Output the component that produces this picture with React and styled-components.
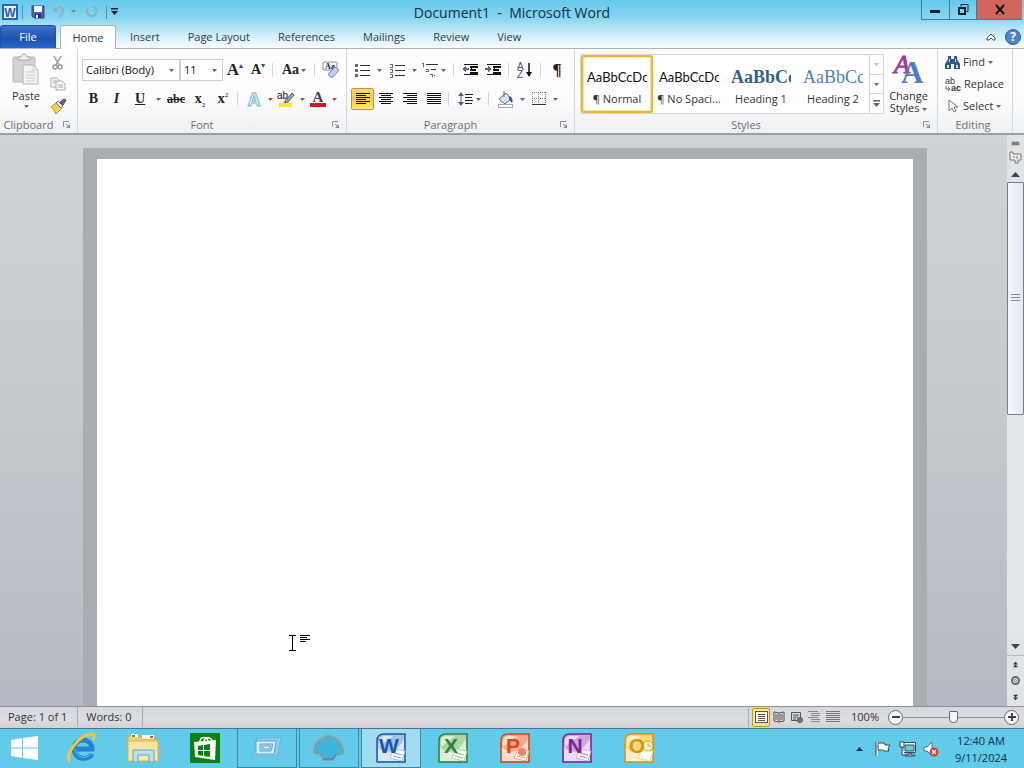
import React from 'react'
import styled, { createGlobalStyle } from 'styled-components'

const Drop = ({ color = '#666' }) => (
  <svg width="5" height="3" viewBox="0 0 5 3"><path d="M0 0h5L2.5 3z" fill={color} /></svg>
)

const Lines = ({ rows, color = '#111' }) => (
  <svg width="16" height="14" viewBox="0 0 16 14" shapeRendering="crispEdges">
    {rows.map(([x, w], i) => <rect key={i} x={x} y={1 + i * 2} width={w} height="1" fill={color} />)}
  </svg>
)

const left = [[1, 14], [1, 10], [1, 14], [1, 10], [1, 14], [1, 10]]
const center = [[1, 14], [3, 10], [1, 14], [3, 10], [1, 14], [3, 10]]
const right = [[1, 14], [5, 10], [1, 14], [5, 10], [1, 14], [5, 10]]
const full = [[1, 14], [1, 14], [1, 14], [1, 14], [1, 14], [1, 14]]
const outline = [[1, 10], [4, 9], [4, 9], [1, 10], [4, 9], [4, 9]]

const WordLogo = () => (
  <svg width="16" height="16" viewBox="0 0 16 16">
    <rect x="1" y="1" width="14" height="14" fill="#e8f2fc" stroke="#2a66b0" strokeWidth="2" />
    <text x="8" y="12.5" textAnchor="middle" fontSize="12" fontWeight="bold" fontFamily="Liberation Sans" fill="#1c5cab">W</text>
  </svg>
)

const SaveIcon = () => (
  <svg width="14" height="14" viewBox="0 0 14 14">
    <path d="M1 1h12v12H3l-2-2z" fill="#4b5fb0" stroke="#33428c" />
    <rect x="3" y="1" width="8" height="6" fill="#f4f8ff" />
    <rect x="4" y="9" width="6" height="4" fill="#223070" />
    <rect x="5" y="10" width="2" height="3" fill="#fff" />
  </svg>
)

const UndoIcon = () => (
  <svg width="13" height="13" viewBox="0 0 13 13" fill="none" stroke="#8fb2c2" strokeWidth="2">
    <path d="M3 5c3-4 8-3 8 1 0 3-2 4-4 6" /><path d="M1 1v6h6z" fill="#8fb2c2" stroke="none" />
  </svg>
)

const RedoIcon = () => (
  <svg width="13" height="13" viewBox="0 0 13 13" fill="none" stroke="#8fb2c2" strokeWidth="2">
    <path d="M3 3C0 6 2 11 6.500 11S13 6 10 3" /><path d="M7 1h5v5z" fill="#8fb2c2" stroke="none" />
  </svg>
)

const MoreIcon = ({ color = '#123' }) => (
  <svg width="7" height="7" viewBox="0 0 7 7"><path d="M0 0h7v1.500H0zM0 3h7L3.500 7z" fill={color} /></svg>
)

const PasteIcon = () => (
  <svg width="28" height="32" viewBox="0 0 28 32">
    <rect x="1" y="3" width="22" height="25" rx="1" fill="#d4d2d4" stroke="#bbb8ba" />
    <path d="M6 6V3h3c0-4 6-4 6 0h3v3z" fill="#eee" stroke="#aaa" />
    <path d="M11 11h10l5 5v14H11z" fill="#f3f2f4" stroke="#b5b3b6" />
    <path d="M21 11v5h5M14 18h9M14 21h9M14 24h9M14 27h9" fill="none" stroke="#cbc9cc" />
  </svg>
)

const CutIcon = () => (
  <svg width="12" height="15" viewBox="0 0 12 15" fill="none" stroke="#999" strokeWidth="1.500">
    <path d="M2 1l5 9M9 1L4 10" /><circle cx="3" cy="12" r="2" /><circle cx="8" cy="12" r="2" />
  </svg>
)

const CopyIcon = () => (
  <svg width="16" height="14" viewBox="0 0 16 14" fill="#f6f6f6" stroke="#aaa">
    <path d="M1 1h6l2 2v7H1z" /><path d="M6 4h6l3 3v6H6z" /><path d="M3 4h3M3 6h2M8 8h5M8 10h5" />
  </svg>
)

const PainterIcon = () => (
  <svg width="17" height="16" viewBox="0 0 17 16">
    <path d="M1 9l5-4 6 5-6 6C5 13 3 11 1 9z" fill="#ead65a" stroke="#a8942a" />
    <path d="M6 5l2-2 5 5-2 2z" fill="#eee" stroke="#777" />
    <path d="M10 4l4-3 2 1-3 5z" fill="#6d5f9a" stroke="#4c4270" />
  </svg>
)

const ClearIcon = () => (
  <svg width="18" height="18" viewBox="0 0 18 18">
    <rect x="1" y="1" width="14" height="8" rx="1" fill="#f4f6fa" stroke="#8a94a8" />
    <text x="8" y="8" textAnchor="middle" fontSize="8" fontWeight="bold" fontFamily="Liberation Serif" fill="#223">Aa</text>
    <path d="M7 12l6-6 4 3-6 7c-3 1-5-1-4-4z" fill="#c9cdea" stroke="#7d82aa" />
  </svg>
)

const HighlightIcon = () => (
  <svg width="18" height="18" viewBox="0 0 18 18">
    <text x="0" y="9" fontSize="10" fontFamily="Liberation Sans" fill="#111">ab</text>
    <path d="M8 11l7-8 2 2-6 7-4 1z" fill="#9aa0b8" stroke="#555b75" />
    <rect x="2" y="13" width="13" height="4" fill="#f7ec1d" />
  </svg>
)

const FontColorIcon = () => (
  <svg width="16" height="18" viewBox="0 0 16 18">
    <text x="8" y="12" textAnchor="middle" fontSize="15" fontWeight="bold" fontFamily="Liberation Serif" fill="#36466f">A</text>
    <rect x="0" y="13" width="16" height="4" fill="#d3141c" />
  </svg>
)

const EffectIcon = () => (
  <svg width="16" height="17" viewBox="0 0 16 17">
    <text x="8" y="15" textAnchor="middle" fontSize="18" fontFamily="Liberation Sans" fontWeight="bold" fill="#e2f6fd" stroke="#74b6d4">A</text>
  </svg>
)

const ListIcon = ({ numbered }) => (
  <svg width="15" height="15" viewBox="0 0 15 15" shapeRendering="crispEdges">
    {[2, 7, 12].map(y => (
      <g key={y}>
        {numbered
          ? <path d={`M0 ${y - 1}h2v3M0 ${y + 2}h3`} stroke="#5c6a86" fill="none" />
          : <rect x="0" y={y - 1} width="3" height="3" fill="#5c6a86" />}
        <rect x="5" y={y} width="10" height="1" fill="#333" />
      </g>
    ))}
  </svg>
)

const MultiIcon = () => (
  <svg width="17" height="16" viewBox="0 0 17 16" shapeRendering="crispEdges" stroke="#5c6a86" fill="none">
    <path d="M0 1.500h1v3M4 7.500h2v2H4M8 12.500h2v2" />
    <path d="M4 2.500h12M9 7.500h5M12 13.500h1" stroke="#333" />
  </svg>
)

const IndentIcon = ({ out }) => (
  <svg width="17" height="14" viewBox="0 0 17 14" shapeRendering="crispEdges">
    <path d="M2 1.500h14M2 11.500h14" stroke="#111" />
    <path d="M8 4h8M8 7h6M8 9.500h8" stroke="#111" strokeWidth="2" />
    <path d="M9 1v12" stroke="#111" strokeDasharray="1 1" />
    <path d={out ? 'M4 3v6L0 6zM4 5h3v2H4z' : 'M3 3v6l4-3zM0 5h3v2H0z'} fill="#4d62a8" />
  </svg>
)

const SortIcon = () => (
  <svg width="16" height="17" viewBox="0 0 16 17">
    <text x="0" y="8" fontSize="10" fontFamily="Liberation Sans" fill="#45506b">A</text>
    <text x="0" y="16" fontSize="10" fontFamily="Liberation Sans" fill="#45506b">Z</text>
    <path d="M12 1v11" stroke="#111" strokeWidth="1.500" /><path d="M9 10h6l-3 5z" fill="#111" />
  </svg>
)

const SpacingIcon = () => (
  <svg width="16" height="16" viewBox="0 0 16 16">
    <path d="M3 3v10" stroke="#4d6088" /><path d="M0 5l3-4 3 4zM0 11l3 4 3-4z" fill="#4d6088" />
    <path d="M7 3.500h8M7 6.500h7M7 9.500h8M7 12.500h7" stroke="#222" />
  </svg>
)

const ShadingIcon = () => (
  <svg width="17" height="17" viewBox="0 0 17 17">
    <path d="M2 8l7-6 5 6-6 5z" fill="#dbe5f2" stroke="#5a6884" /><path d="M7 0v6" stroke="#5a6884" />
    <path d="M12 5c4 1 4 5 3 7-1-1-2-2-3-4z" fill="#3c5c8c" />
    <rect x="1.500" y="13.500" width="14" height="3" fill="#fff" stroke="#9ab" />
  </svg>
)

const BorderIcon = () => (
  <svg width="14" height="14" viewBox="0 0 14 14" shapeRendering="crispEdges" fill="none" stroke="#777">
    <path d="M.5 0v13M6.500 0v13M13.500 0v13M0 .5h14M0 6.500h14" strokeDasharray="1 1" />
    <path d="M0 12.500h14" stroke="#333" />
  </svg>
)

const ChangeIcon = () => (
  <svg width="32" height="30" viewBox="0 0 32 30" fontFamily="Liberation Serif">
    <text x="1" y="19" fontSize="26" fontStyle="italic" fill="#a23a9c" stroke="#a23a9c">A</text>
    <text x="8" y="29" fontSize="31" fontWeight="bold" fill="#4a7cc8">A</text>
  </svg>
)

const FindIcon = () => (
  <svg width="15" height="13" viewBox="0 0 15 13" fill="#33588f">
    <path d="M3 0h3v3h3V0h3v3l3 5v5H9V8H6v5H0V8l3-5z" />
    <path d="M2 9h2v3H2zM11 9h2v3h-2zM4 3h1v3H4zM10 3h1v3h-1z" fill="#c6dcf5" />
  </svg>
)

const ReplaceIcon = () => (
  <svg width="16" height="15" viewBox="0 0 16 15" fontFamily="Liberation Sans" fontSize="9" fill="#333">
    <text x="0" y="7">ab</text><text x="6" y="14" fontWeight="bold">ac</text>
    <path d="M1 9v3h4M3 10l2 2-2 2" fill="none" stroke="#3e62a4" />
  </svg>
)

const SelectIcon = () => (
  <svg width="15" height="15" viewBox="0 0 15 15">
    <path d="M4 1v11l3-3 2 4 2-1-2-4h4z" fill="#fff" stroke="#66708a" />
  </svg>
)

const Launcher = () => (
  <svg width="8" height="8" viewBox="0 0 8 8" fill="none" stroke="#8b8f96">
    <path d="M.5 6V.5H6M3 3l3 3" /><path d="M7 3v4H3z" fill="#8b8f96" stroke="none" />
  </svg>
)

const UpTri = () => <svg width="9" height="5" viewBox="0 0 9 5"><path d="M0 5h9L4.500 0z" fill="#444" /></svg>
const DownTri = () => <svg width="9" height="5" viewBox="0 0 9 5"><path d="M0 0h9L4.500 5z" fill="#444" /></svg>

const RulerIcon = () => (
  <svg width="13" height="13" viewBox="0 0 13 13" fill="#eee" stroke="#777">
    <path d="M1 1h3v2h8v6H9v3H6V9H1zM4 5l2 2M8 5v3" />
  </svg>
)

const PageJump = ({ down }) => (
  <svg width="5" height="7" viewBox="0 0 7 8" fill="#333">
    <path d={down ? 'M0 0h7L3.500 4zM0 4h7L3.500 8z' : 'M0 4h7L3.500 0zM0 8h7L3.500 4z'} />
  </svg>
)

const BrowseIcon = () => (
  <svg width="9" height="9" viewBox="0 0 9 9" fill="#eee" stroke="#666">
    <circle cx="4.500" cy="4.500" r="3.500" strokeWidth="2" /><circle cx="4.500" cy="4.500" r="1" />
  </svg>
)

const StartIcon = () => (
  <svg width="27" height="24" viewBox="0 0 27 24" fill="#fff">
    <path d="M0 4l11-2v9.500H0zM12 2l15-2v11.500H12zM0 12.500h11V22L0 20zM12 12.500h15V24l-15-2z" />
  </svg>
)

const IeIcon = () => (
  <svg width="32" height="32" viewBox="0 0 32 32" fill="none">
    <path d="M27 22c-3 6-17 7-18-5C9 5 27 5 27 17H11" stroke="#2484cf" strokeWidth="5" />
    <path d="M26 22c-4 5-15 5-16-5" stroke="#62bdf0" />
    <path d="M5 29C-2 25 14 2 27 2c3 0 3 3 1 6" stroke="#f1c63a" strokeWidth="3" />
  </svg>
)

const FolderIcon = () => (
  <svg width="32" height="30" viewBox="0 0 32 30">
    <path d="M1 3h12l2 3h16v22H1z" fill="#edcf78" stroke="#cba34c" />
    <path d="M4 1h7v3H4zM15 2h12v4H15z" fill="#fff8df" />
    <path d="M5 2h3v2H5z" fill="#36a545" /><path d="M23 3h3v2h-3z" fill="#cb5044" />
    <path d="M1 8h30v20H1z" fill="#f9e59c" stroke="#dcb65b" />
    <path d="M6 29V17h21v12h-5v-7H11v7z" fill="#b7def5" stroke="#5fa9d9" />
  </svg>
)

const StoreIcon = () => (
  <svg width="30" height="30" viewBox="0 0 30 30">
    <rect width="30" height="30" fill="#0a8212" />
    <path d="M10 9c0-6 8-6 8 0M14 9c0-6 8-5 8-1" fill="none" stroke="#fff" strokeWidth="1.500" />
    <path d="M4 9l22-2-1 20-20-3z" fill="#fff" />
    <path d="M8 13l5-1v5H8zM14 12l6-1v6h-6zM8 18h5v5l-5-1zM14 18h6v6l-6-1z" fill="#0a8212" />
  </svg>
)

const RunIcon = () => (
  <svg width="30" height="22" viewBox="0 0 30 22" fill="#d9effa" stroke="#5fa5d0">
    <path d="M5 1h24l-4 18H1z" fill="#8fcdec" stroke="#74b5da" /><path d="M4 4h20l-2 13H4z" />
    <path d="M8 7h13l-2 7H8z" fill="#9ad5f3" /><path d="M11 9h7l-1 3h-6z" fill="#eef9ff" />
  </svg>
)

const ShellIcon = () => (
  <svg width="32" height="26" viewBox="0 0 32 26">
    <path d="M10 25l-3-6-6-1c-1-3 0-5 1-6 0-3 2-5 4-6 1-3 4-3 6-4 2-2 5-2 7 0 3 0 5 2 6 4 3 1 4 4 4 6 2 3 2 5 0 7l-6 1-3 5z" fill="#3fb4dc" stroke="#a8918e" strokeWidth="1.500" />
    <path d="M8 9L6 6M13 6l-1-3M19 6l1-3M24 9l2-2" stroke="#a8918e" />
    <path d="M10 24h10l3-5" fill="none" stroke="#2f86aa" />
  </svg>
)

const OfficeIcon = ({ letter, color, pale }) => (
  <svg width="30" height="30" viewBox="0 0 30 30">
    <path d="M1 8Q1 1 8 1h21v28H1z" fill={pale} stroke={color} strokeWidth="1.500" />
    <path d="M2 28V14C10 22 20 20 28 6v22z" fill="#fff" opacity=".6" />
    <path d="M3 9Q3 3 8 3h9L3 14z" fill="#fff" opacity=".6" />
    <path d="M18 16l11 2-3 10-12-3z" fill="#fff" stroke={pale} />
    {letter === 'O'
      ? <g><circle cx="24" cy="13" r="5" fill="#fff6d8" stroke={color} /><path d="M24 10v3h3" fill="none" stroke={color} /></g>
      : <path d="M18 20l8 2M17 23l8 2" stroke={color} opacity=".6" />}
    {letter === 'P' && <circle cx="22" cy="19" r="4" fill="#e98360" />}
    <text x="13" y="20" textAnchor="middle" fontSize="21" fontWeight="bold" fontFamily="Liberation Sans" fill={color}>{letter}</text>
  </svg>
)

const FlagIcon = () => (
  <svg width="16" height="16" viewBox="0 0 16 16">
    <path d="M2 1v14" stroke="#fff" strokeWidth="2" /><path d="M1 1v14" stroke="#345" />
    <path d="M3 2h6l1 2h5l-2 3 1 3H9L8 9H3z" fill="#fff" stroke="#345" />
  </svg>
)

const NetIcon = () => (
  <svg width="17" height="16" viewBox="0 0 17 16">
    <path d="M5 3h11v8H5z" fill="#62cbea" stroke="#fff" strokeWidth="2" />
    <path d="M4 1.500h12.500v10H4zM6 4h9v6H6z" fill="none" stroke="#345" />
    <path d="M10 12v2H6v1h10v-1h-4v-2z" fill="#fff" stroke="#345" />
    <path d="M1 1h4v5H1zM3 6v8h3" fill="#fff" stroke="#345" />
  </svg>
)

const VolumeIcon = () => (
  <svg width="16" height="16" viewBox="0 0 16 16">
    <path d="M1 6h3l5-5v14l-5-5H1z" fill="#fff" stroke="#667" />
    <circle cx="11" cy="11" r="4.500" fill="#d83c35" />
    <path d="M9 9l4 4M13 9l-4 4" stroke="#fff" strokeWidth="1.500" />
  </svg>
)

const ReadIcon = () => (
  <svg width="12" height="12" viewBox="0 0 12 12" fill="none" stroke="#555">
    <path d="M6 2v9M6 2L1 1v9l5 1 5-1V1zM2 4h3M2 6h3M2 8h3M7 4h3M7 6h3M7 8h3" />
  </svg>
)

const WebIcon = () => (
  <svg width="12" height="12" viewBox="0 0 12 12" fill="none" stroke="#555">
    <path d="M.5 1.500h9v8h-9zM2 4h6M2 6h5M2 8h3" /><circle cx="9" cy="9" r="2.500" fill="#778" />
  </svg>
)

const PrintIcon = () => (
  <svg width="13" height="12" viewBox="0 0 13 12" fill="#fffbe8" stroke="#555" shapeRendering="crispEdges">
    <path d="M.5.5h12v11H.5zM3 3.500h7M3 5.500h7M3 7.500h7M3 9.500h7" />
  </svg>
)

const BeamIcon = () => (
  <svg width="22" height="18" viewBox="0 0 22 18" shapeRendering="crispEdges" fill="none" stroke="#000">
    <path d="M1 1.500h7M1 16.500h7M4.500 2v14M12 1.500h10M12 3.500h7M12 5.500h10M12 7.500h6" />
  </svg>
)

const tabs = ['Insert', 'Page Layout', 'References', 'Mailings', 'Review', 'View']

const apps = [
  { name: 'Word', letter: 'W', color: '#1b57a8', pale: '#9fc4ec', state: 'active' },
  { name: 'Excel', letter: 'X', color: '#347f3c', pale: '#abd6a4' },
  { name: 'PowerPoint', letter: 'P', color: '#cf4a1c', pale: '#f3a98a' },
  { name: 'OneNote', letter: 'N', color: '#72288c', pale: '#d3a4df' },
  { name: 'Outlook', letter: 'O', color: '#dc9413', pale: '#f8d879' },
]

const ClipboardGroup = () => (
  <Group $w={78}>
    <ClipBody>
      <PasteButton><PasteIcon /><span>Paste</span><Drop /></PasteButton>
      <ClipTools>
        <Tool $w={20} aria-label="Cut"><CutIcon /></Tool>
        <Tool $w={20} aria-label="Copy"><CopyIcon /></Tool>
        <Tool $w={20} aria-label="Format painter"><PainterIcon /></Tool>
      </ClipTools>
    </ClipBody>
    <GroupLabel><span>Clipboard</span><Corner aria-label="Clipboard options"><Launcher /></Corner></GroupLabel>
  </Group>
)

const FontGroup = () => (
  <Group $w={269}>
    <Rows>
      <Row>
        <SelectBox $w={98}>
          <select aria-label="Font" defaultValue="Calibri (Body)"><option>Calibri (Body)</option></select>
          <Drop />
        </SelectBox>
        <SelectBox $w={43}>
          <select aria-label="Font size" defaultValue="11"><option>11</option></select>
          <Drop />
        </SelectBox>
        <Tool $w={24}><Serif $size={17}>A</Serif><Mark>▴</Mark></Tool>
        <Tool $w={22}><Serif $size={14}>A</Serif><Mark>▾</Mark></Tool>
        <Sep />
        <Tool $w={34}><Serif $size={14}>Aa</Serif><Drop /></Tool>
        <Sep />
        <Tool $w={24} aria-label="Clear formatting"><ClearIcon /></Tool>
      </Row>
      <Row>
        <Tool $w={23}><Serif $size={14}>B</Serif></Tool>
        <Tool $w={23}><Serif $size={14} $italic>I</Serif></Tool>
        <Tool $w={24}><Serif $size={14} $line="underline">U</Serif></Tool>
        <Tool $w={12} aria-label="Underline style"><Drop /></Tool>
        <Tool $w={24}><Serif $size={12} $line="line-through">abc</Serif></Tool>
        <Tool $w={24}><Serif $size={14}>x<sub>2</sub></Serif></Tool>
        <Tool $w={22}><Serif $size={14}>x<sup>2</sup></Serif></Tool>
        <Sep />
        <Tool $w={24} aria-label="Text effects"><EffectIcon /></Tool>
        <Tool $w={8} aria-label="Effect list"><Drop /></Tool>
        <Tool $w={24} aria-label="Highlight"><HighlightIcon /></Tool>
        <Tool $w={8} aria-label="Highlight colors"><Drop /></Tool>
        <Tool $w={24} aria-label="Font color"><FontColorIcon /></Tool>
        <Tool $w={8} aria-label="Font colors"><Drop /></Tool>
      </Row>
    </Rows>
    <GroupLabel><span>Font</span><Corner aria-label="Font options"><Launcher /></Corner></GroupLabel>
  </Group>
)

const ParagraphGroup = () => (
  <Group $w={228}>
    <Rows>
      <Row>
        <Tool $w={23} aria-label="Bullets"><ListIcon /></Tool>
        <Tool $w={10} aria-label="Bullet styles"><Drop /></Tool>
        <Tool $w={26} aria-label="Numbering"><ListIcon numbered /></Tool>
        <Tool $w={8} aria-label="Number styles"><Drop /></Tool>
        <Tool $w={32} aria-label="Multilevel list"><MultiIcon /><Drop /></Tool>
        <Sep />
        <Tool $w={24} aria-label="Decrease indent"><IndentIcon out /></Tool>
        <Tool $w={23} aria-label="Increase indent"><IndentIcon /></Tool>
        <Sep />
        <Tool $w={24} aria-label="Sort"><SortIcon /></Tool>
        <Sep />
        <Tool $w={24}><Serif $size={17}>¶</Serif></Tool>
      </Row>
      <Row>
        <Tool $w={23} $on aria-label="Align left"><Lines rows={left} /></Tool>
        <Tool $w={24} aria-label="Center"><Lines rows={center} /></Tool>
        <Tool $w={24} aria-label="Align right"><Lines rows={right} /></Tool>
        <Tool $w={23} aria-label="Justify"><Lines rows={full} /></Tool>
        <Sep />
        <Tool $w={32} aria-label="Line spacing"><SpacingIcon /><Drop /></Tool>
        <Sep />
        <Tool $w={24} aria-label="Shading"><ShadingIcon /></Tool>
        <Tool $w={10} aria-label="Shading colors"><Drop /></Tool>
        <Tool $w={24} aria-label="Borders"><BorderIcon /></Tool>
        <Tool $w={8} aria-label="Border list"><Drop /></Tool>
      </Row>
    </Rows>
    <GroupLabel><span>Paragraph</span><Corner aria-label="Paragraph options"><Launcher /></Corner></GroupLabel>
  </Group>
)

const StylesGroup = () => (
  <Group $w={363} $grow>
    <StylesBody>
      <Gallery>
        <StyleItem $on><Preview>AaBbCcDc</Preview><span>¶ Normal</span></StyleItem>
        <StyleItem><Preview>AaBbCcDc</Preview><span>¶ No Spaci...</span></StyleItem>
        <StyleItem><Preview $heading $bold $color="#365f91">AaBbCc</Preview><span>Heading 1</span></StyleItem>
        <StyleItem><Preview $heading $color="#4f81bd">AaBbCc</Preview><span>Heading 2</span></StyleItem>
        <GalleryScroll>
          <button aria-label="Previous styles"><Drop color="#bbb" /></button>
          <button aria-label="Next styles"><Drop /></button>
          <button aria-label="More styles"><MoreIcon color="#666" /></button>
        </GalleryScroll>
      </Gallery>
      <ChangeButton><ChangeIcon /><span>Change</span><span>Styles <Drop /></span></ChangeButton>
    </StylesBody>
    <GroupLabel><span>Styles</span><Corner aria-label="Style options"><Launcher /></Corner></GroupLabel>
  </Group>
)

const EditingGroup = () => (
  <Group $w={75}>
    <EditBody>
      <EditButton><FindIcon />Find <Drop /></EditButton>
      <EditButton><ReplaceIcon />Replace</EditButton>
      <EditButton><SelectIcon />Select <Drop /></EditButton>
    </EditBody>
    <GroupLabel><span>Editing</span></GroupLabel>
  </Group>
)

const App = () => {
  return (
    <Window>
      <GlobalStyle />
      <Top>
        <TitleBar>
          <QuickBar>
            <WordLogo />
            <QuickSep />
            <Tool $w={24} aria-label="Save"><SaveIcon /></Tool>
            <Tool $w={16} aria-label="Undo"><UndoIcon /></Tool>
            <Tool $w={14} aria-label="Undo list"><Drop color="#5f8fa6" /></Tool>
            <Tool $w={22} aria-label="Redo"><RedoIcon /></Tool>
            <QuickSep />
            <Tool $w={8} aria-label="Customize"><MoreIcon /></Tool>
          </QuickBar>
          <Title>{'Document1  -  Microsoft Word'}</Title>
          <WindowButtons>
            <WindowButton $w={28} aria-label="Minimize">
              <svg width="11" height="11" viewBox="0 0 11 11"><path d="M0 6h10v3H0z" fill="#12222c" /></svg>
            </WindowButton>
            <WindowButton $w={27} aria-label="Restore">
              <svg width="11" height="11" viewBox="0 0 11 11" fill="none" stroke="#12222c">
                <path d="M3 2.500V.5h7v7H8" /><path d="M1 4h6v6H1z" strokeWidth="2" />
              </svg>
            </WindowButton>
            <WindowButton $w={46} $close aria-label="Close">
              <svg width="10" height="9" viewBox="0 0 10 9"><path d="M1 0l8 9M9 0L1 9" stroke="#12121c" strokeWidth="2" /></svg>
            </WindowButton>
          </WindowButtons>
        </TitleBar>
        <TabBar>
          <FileTab>File</FileTab>
          <HomeTab>Home</HomeTab>
          {tabs.map(t => <Tab key={t}>{t}</Tab>)}
          <TabTools>
            <Tool $w={16} aria-label="Minimize the ribbon">
              <svg width="10" height="8" viewBox="0 0 10 8" fill="#fff" stroke="#456"><path d="M1 5l4-4 4 4v2H7L5 5 3 7H1z" /></svg>
            </Tool>
            <HelpButton>?</HelpButton>
          </TabTools>
        </TabBar>
      </Top>

      <Ribbon>
        <ClipboardGroup />
        <FontGroup />
        <ParagraphGroup />
        <StylesGroup />
        <EditingGroup />
      </Ribbon>

      <Work>
        <Canvas>
          <Frame>
            <Page>
              <Beam><BeamIcon /></Beam>
            </Page>
          </Frame>
        </Canvas>
        <Scroll>
          <SplitBar />
          <ScrollButton $h={18} aria-label="Ruler"><RulerIcon /></ScrollButton>
          <ScrollButton $h={16} aria-label="Scroll up"><UpTri /></ScrollButton>
          <Track>
            <Thumb>
              <svg width="9" height="8" viewBox="0 0 9 8" stroke="#889"><path d="M0 .5h9M0 3.500h9M0 6.500h9" /></svg>
            </Thumb>
          </Track>
          <ScrollButton $h={17} aria-label="Scroll down"><DownTri /></ScrollButton>
          <ScrollButton $h={17} $line aria-label="Previous page"><PageJump /></ScrollButton>
          <ScrollButton $h={17} aria-label="Browse by"><BrowseIcon /></ScrollButton>
          <ScrollButton $h={17} aria-label="Next page"><PageJump down /></ScrollButton>
        </Scroll>
      </Work>

      <StatusBar>
        <StatusText>Page: 1 of 1</StatusText>
        <StatusText>Words: 0</StatusText>
        <ViewTools>
          <ViewButton $on aria-label="Print layout"><PrintIcon /></ViewButton>
          <ViewButton aria-label="Reading"><ReadIcon /></ViewButton>
          <ViewButton aria-label="Web layout"><WebIcon /></ViewButton>
          <ViewButton aria-label="Outline"><Lines rows={outline} color="#888" /></ViewButton>
          <ViewButton aria-label="Draft"><Lines rows={full} color="#777" /></ViewButton>
          <ZoomText>100%</ZoomText>
          <RoundButton aria-label="Zoom out"><svg width="8" height="8" viewBox="0 0 8 8"><path d="M0 3h8v2H0z" fill="#444" /></svg></RoundButton>
          <ZoomSlider type="range" min="0" max="100" defaultValue="50" aria-label="Zoom" />
          <RoundButton aria-label="Zoom in"><svg width="8" height="8" viewBox="0 0 8 8"><path d="M0 3h8v2H0zM3 0h2v8H3z" fill="#444" /></svg></RoundButton>
        </ViewTools>
      </StatusBar>

      <TaskBar>
        <StartButton aria-label="Start"><StartIcon /></StartButton>
        <TaskButton aria-label="Internet Explorer"><IeIcon /></TaskButton>
        <TaskButton aria-label="File Explorer"><FolderIcon /></TaskButton>
        <TaskButton aria-label="Store"><StoreIcon /></TaskButton>
        <TaskButton $state="open" aria-label="Run"><RunIcon /></TaskButton>
        <TaskButton $state="open" aria-label="Shell"><ShellIcon /></TaskButton>
        {apps.map(a => (
          <TaskButton key={a.name} $state={a.state} aria-label={a.name}>
            <OfficeIcon letter={a.letter} color={a.color} pale={a.pale} />
          </TaskButton>
        ))}
        <Tray>
          <Tool $w={24} aria-label="Hidden icons"><svg width="7" height="4" viewBox="0 0 7 4"><path d="M0 4h7L3.500 0z" fill="#12303c" /></svg></Tool>
          <Tool $w={24} aria-label="Action center"><FlagIcon /></Tool>
          <Tool $w={24} aria-label="Network"><NetIcon /></Tool>
          <Tool $w={24} aria-label="Volume"><VolumeIcon /></Tool>
          <Clock><span>12:40 AM</span><span>9/11/2024</span></Clock>
        </Tray>
      </TaskBar>
    </Window>
  )
}

export default App

const GlobalStyle = createGlobalStyle`
    * { box-sizing: border-box; }
    body {
        margin: 0;
        overflow: hidden;
        font-family: "Open Sans", "Noto Sans", sans-serif;
        font-size: 11px;
        line-height: 14px;
        color: #333;
    }
    button, select, input { font: inherit; color: inherit; margin: 0; padding: 0; }
    button { border: 0; background: none; }
    svg { display: block; flex: none; overflow: visible; }
`

const Window = styled.div`
    height: 100vh;
    display: flex;
    flex-direction: column;
`

const Tool = styled.button`
    width: ${props => props.$w}px;
    height: 22px;
    flex: none;
    display: flex;
    align-items: center;
    justify-content: center;
    gap: 2px;
    border-radius: 2px;
    ${props => props.$on && `
        border: 1px solid #c9922a;
        background: linear-gradient(#fdd877, #fbc94d 50%, #fde584);
    `}
`

/* title bar and tabs */

const Top = styled.header`
    flex: none;
    background: linear-gradient(#66caec, #86d5f0 18px, #c5eaf7 32px, #f5fbfe 47px);
    border-bottom: 1px solid #a9b4ba;
`

const TitleBar = styled.div`
    height: 25px;
    display: grid;
    grid-template-columns: 1fr auto 1fr;
    align-items: start;
`

const QuickBar = styled.div`
    height: 23px;
    padding-left: 2px;
    display: flex;
    align-items: center;
`

const QuickSep = styled.div`
    width: 1px;
    height: 14px;
    margin: 0 3px 0 4px;
    background: #4f97b5;
`

const Title = styled.div`
    padding-top: 2px;
    font-size: 14px;
    line-height: 22px;
    color: #14303d;
    white-space: pre;
`

const WindowButtons = styled.div`
    justify-self: end;
    display: flex;
    margin-right: 2px;
`

const WindowButton = styled.button`
    width: ${props => props.$w}px;
    height: 20px;
    display: flex;
    align-items: center;
    justify-content: center;
    border: 1px solid #3f7d96;
    border-width: 0 0 1px 1px;
    background: ${props => props.$close ? '#d2655c' : 'transparent'};
`

const TabBar = styled.nav`
    height: 23px;
    display: flex;
`

const Tab = styled.button`
    padding: 0 14px;
    line-height: 22px;
    color: #2c3e4a;
`

const FileTab = styled(Tab)`
    width: 56px;
    color: #fff;
    border-radius: 3px 3px 0 0;
    background: linear-gradient(#3a72c8, #1d51b0 60%, #2b66cc);
    border: 1px solid #2551a0;
    border-bottom: 0;
`

const HomeTab = styled(Tab)`
    width: 56px;
    margin-left: 4px;
    padding: 0;
    height: 24px;
    margin-bottom: -1px;
    border: 1px solid #a9b4ba;
    border-bottom: 0;
    border-radius: 3px 3px 0 0;
    background: #fff;
`

const TabTools = styled.div`
    margin-left: auto;
    padding-right: 3px;
    display: flex;
    align-items: center;
    gap: 6px;
`

const HelpButton = styled.button`
    width: 16px;
    height: 16px;
    border-radius: 50%;
    border: 1px solid #2d569e;
    background: #5484cf;
    color: #fff;
    font-size: 12px;
    font-weight: bold;
    line-height: 14px;
`

/* ribbon */

const Ribbon = styled.section`
    flex: none;
    height: 86px;
    padding-right: 12px;
    display: flex;
    background: linear-gradient(#fff, #fcfcfd 60%, #eef0f2);
    border-bottom: 2px solid #9b9fa4;
`

const Group = styled.div`
    width: ${props => props.$w}px;
    flex: ${props => props.$grow ? '1 0 auto' : 'none'};
    display: flex;
    flex-direction: column;
    border-right: 1px solid #d3d6da;
`

const GroupLabel = styled.div`
    height: 16px;
    padding-right: 4px;
    display: flex;
    align-items: center;
    color: #6c7077;
    span { flex: 1; text-align: center; white-space: nowrap; }
    span:not(:only-child) { padding-right: 4px; }
`

const Corner = styled.button`
    width: 12px;
    height: 12px;
    display: grid;
    place-items: center;
`

const ClipBody = styled.div`
    flex: 1;
    display: flex;
`

const PasteButton = styled.button`
    width: 48px;
    padding: 5px 0 0 4px;
    display: flex;
    flex-direction: column;
    align-items: center;
    gap: 3px;
    line-height: 13px;
`

const ClipTools = styled.div`
    padding-top: 2px;
`

const Rows = styled.div`
    flex: 1;
    padding: 10px 0 0 4px;
    display: flex;
    flex-direction: column;
    gap: 7px;
`

const Row = styled.div`
    height: 22px;
    display: flex;
    align-items: center;
`

const Sep = styled.div`
    width: 1px;
    height: 14px;
    margin: 0 4px 0 3px;
    background: #d3d6da;
`

const SelectBox = styled.label`
    position: relative;
    width: ${props => props.$w}px;
    height: 22px;
    flex: none;
    select {
        appearance: none;
        width: 100%;
        height: 100%;
        padding-left: 3px;
        border: 1px solid #ccd0d5;
        border-radius: 0;
        background: #fff;
        color: #111;
    }
    svg {
        position: absolute;
        right: 6px;
        top: 10px;
        pointer-events: none;
    }
`

const Serif = styled.span`
    font-family: "Liberation Serif", serif;
    font-size: ${props => props.$size}px;
    font-weight: bold;
    font-style: ${props => props.$italic ? 'italic' : 'normal'};
    text-decoration: ${props => props.$line || 'none'};
    line-height: 18px;
    color: #222;
    sub, sup { font-size: 7px; line-height: 0; color: #3c5c9c; }
`

const Mark = styled.small`
    align-self: flex-start;
    font-size: 8px;
    line-height: 12px;
    margin-left: -2px;
    color: #3c4c6c;
`

const StylesBody = styled.div`
    flex: 1;
    display: flex;
    padding: 5px 4px 0 5px;
`

const Gallery = styled.div`
    flex: 1;
    height: 60px;
    display: flex;
    border: 1px solid #d3d6da;
    background: #fff;
`

const StyleItem = styled.button`
    width: 72px;
    padding: 9px 4px 0;
    display: flex;
    flex-direction: column;
    gap: 5px;
    align-items: center;
    white-space: nowrap;
    ${props => props.$on && `
        border: 2px solid #efb73a;
        border-radius: 2px;
        box-shadow: inset 0 0 0 1px #fbe29a;
        padding: 7px 2px 0;
    `}
`

const Preview = styled.span`
    width: 60px;
    height: 23px;
    overflow: hidden;
    text-align: left;
    line-height: 26px;
    font-family: ${props => props.$heading ? '"Liberation Serif", serif' : 'Lato, sans-serif'};
    font-size: ${props => props.$heading ? 18 : 13}px;
    font-weight: ${props => props.$bold ? 'bold' : 'normal'};
    color: ${props => props.$color || '#111'};
`

const GalleryScroll = styled.div`
    width: 14px;
    margin-left: auto;
    display: flex;
    flex-direction: column;
    border-left: 1px solid #d3d6da;
    button { flex: 1; display: grid; place-items: center; }
    button + button { border-top: 1px solid #d3d6da; }
`

const ChangeButton = styled.button`
    width: 50px;
    display: flex;
    flex-direction: column;
    align-items: center;
    line-height: 12px;
    svg + span { padding-top: 6px; }
    span svg { display: inline-block; vertical-align: middle; }
`

const EditBody = styled.div`
    flex: 1;
    padding: 2px 0 0 7px;
    display: flex;
    flex-direction: column;
`

const EditButton = styled.button`
    height: 22px;
    display: flex;
    align-items: center;
    gap: 3px;
`

/* document */

const Work = styled.main`
    flex: 1;
    min-height: 0;
    display: flex;
`

const Canvas = styled.div`
    flex: 1;
    padding: 13px 80px 0 83px;
    display: flex;
    background: linear-gradient(#ced3d8, #c5c9cd 50%, #b4b9c3);
`

const Frame = styled.div`
    flex: 1;
    padding: 11px 14px 0;
    display: flex;
    background: #a9adb1;
`

const Page = styled.div`
    position: relative;
    flex: 1;
    background: #fff;
`

const Beam = styled.div`
    position: absolute;
    left: 191px;
    top: 475px;
`

const Scroll = styled.aside`
    width: 17px;
    display: flex;
    flex-direction: column;
    background: #dfe4e9;
`

const SplitBar = styled.div`
    height: 5px;
    margin: 6px 4px 2px;
    background: #777c82;
    border: 1px solid #c5c9ce;
`

const ScrollButton = styled.button`
    height: ${props => props.$h}px;
    display: grid;
    place-items: center;
    border-top: ${props => props.$line ? '1px solid #b4bac2' : '0'};
`

const Track = styled.div`
    flex: 1;
    background: #e2e6ea;
`

const Thumb = styled.div`
    height: 51%;
    display: grid;
    place-items: center;
    border: 1px solid #767d88;
    border-radius: 1px;
    background: linear-gradient(90deg, #f6f8fc, #e3e8f2);
`

/* status bar */

const StatusBar = styled.footer`
    flex: none;
    height: 22px;
    padding-bottom: 1px;
    display: flex;
    align-items: center;
    border-top: 1px solid #8e9298;
    background: linear-gradient(#d4d8dc, #dcdde1 60%, #dbcdd3);
`

const StatusText = styled.div`
    height: 20px;
    padding: 0 10px 0 8px;
    line-height: 20px;
    border-right: 1px solid #a9adb3;
`

const ViewTools = styled.div`
    margin-left: auto;
    padding: 0 5px 0 3px;
    display: flex;
    align-items: center;
    border-left: 1px solid #a9adb3;
`

const ViewButton = styled.button`
    width: 18px;
    height: 19px;
    display: grid;
    place-items: center;
    ${props => props.$on && 'background: #fde68f; border: 1px solid #c9922a; border-radius: 2px;'}
`

const ZoomText = styled.button`
    width: 46px;
    text-align: center;
`

const RoundButton = styled.button`
    width: 15px;
    height: 15px;
    display: grid;
    place-items: center;
    border: 1px solid #666b72;
    border-radius: 50%;
    background: #f6f7f9;
`

const ZoomSlider = styled.input`
    appearance: none;
    width: 101px;
    height: 14px;
    background: linear-gradient(#8c9096, #8c9096) center / 100% 1px no-repeat;
    &::-webkit-slider-thumb {
        appearance: none;
        width: 9px;
        height: 12px;
        border: 1px solid #666b72;
        border-radius: 1px 1px 4px 4px;
        background: #f6f7f9;
    }
`

/* task bar */

const TaskBar = styled.footer`
    flex: none;
    height: 40px;
    display: flex;
    gap: 2px;
    border-top: 1px solid #3b7c94;
    background: #62cbea;
`

const TaskButton = styled.button`
    width: 60px;
    display: grid;
    place-items: center;
    border: 1px solid transparent;
    border-top: 0;
    ${props => props.$state && 'border-color: #3c86a2;'}
    ${props => props.$state === 'active' && 'background: #a2dcf0;'}
`

const StartButton = styled(TaskButton)`
    width: 49px;
`

const Tray = styled.div`
    margin-left: auto;
    padding-right: 14px;
    display: flex;
    align-items: center;
`

const Clock = styled.time`
    width: 58px;
    margin-left: 9px;
    display: flex;
    flex-direction: column;
    align-items: center;
    font-size: 11px;
    line-height: 17px;
    color: #12303c;
`
